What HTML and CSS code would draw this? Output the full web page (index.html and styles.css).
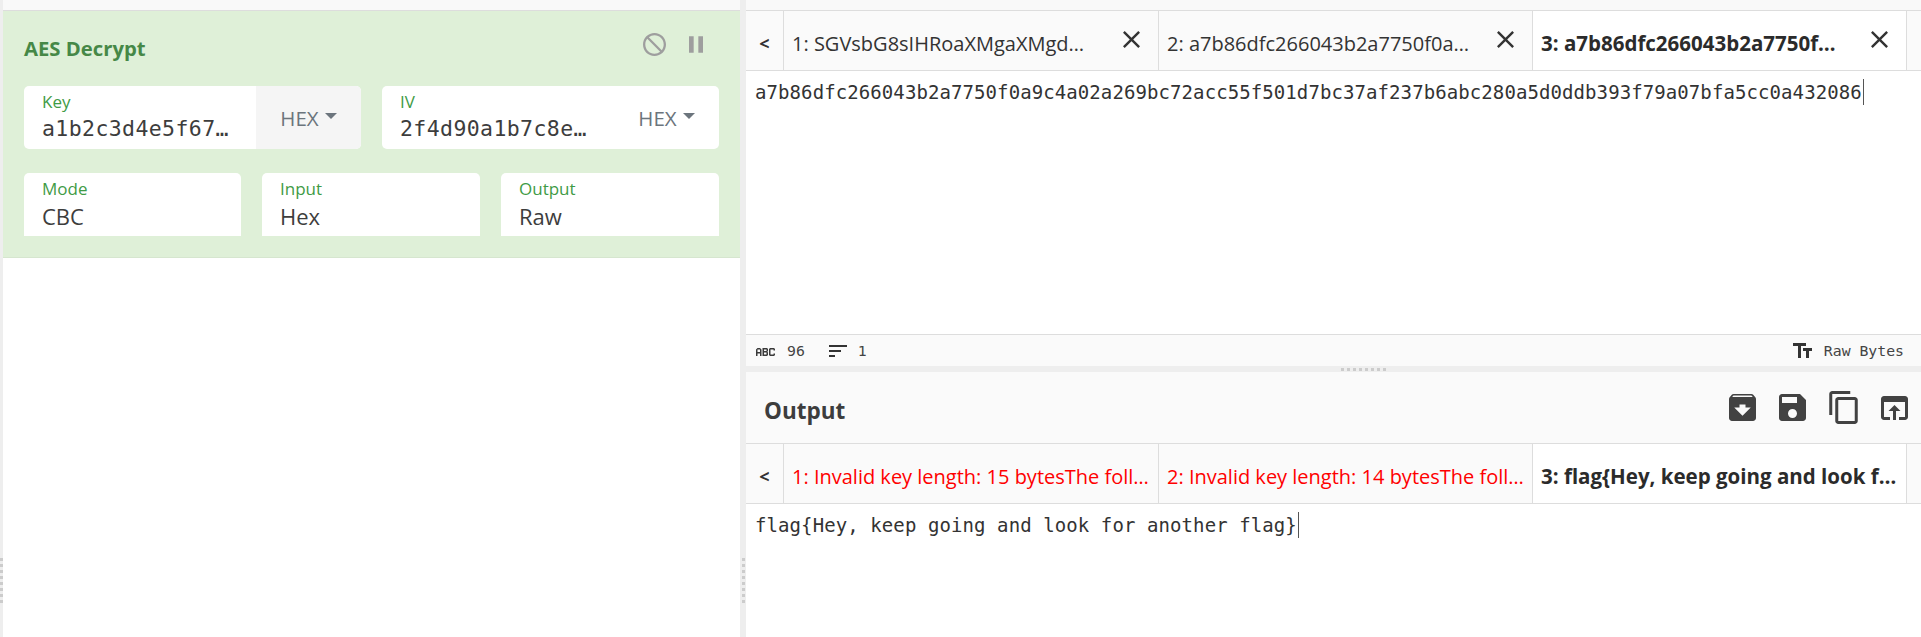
FILE: index.html
```html
<!DOCTYPE html>
<html lang="en">
<head>
<meta charset="utf-8">
<title>CyberChef</title>
<link rel="stylesheet" href="styles.css">
</head>
<body>
<div class="app">
  <section class="recipe">
    <div class="topstrip"></div>
    <div class="op">
      <div class="op-head">
        <div class="op-title">AES Decrypt</div>
        <div class="op-icons">
          <svg class="ic-dis" viewBox="2 2 20 20"><path d="M12 2C6.480 2 2 6.480 2 12s4.480 10 10 10 10-4.480 10-10S17.520 2 12 2zM4 12c0-4.420 3.580-8 8-8 1.850 0 3.550.63 4.900 1.690L5.690 16.900C4.630 15.550 4 13.850 4 12zm8 8c-1.850 0-3.550-.63-4.900-1.690L18.310 7.100C19.370 8.450 20 10.150 20 12c0 4.420-3.580 8-8 8z" fill="#9e9e9e"/></svg>
          <svg class="ic-pause" viewBox="6 5 12 14"><path d="M6 19h4V5H6v14zm8-14v14h4V5h-4z" fill="#9e9e9e"/></svg>
        </div>
      </div>
      <div class="row row-two">
        <div class="field">
          <div class="field-main"><label>Key</label><div class="val mono">a1b2c3d4e5f67…</div></div>
          <div class="drop shaded">HEX<i class="caret"></i></div>
        </div>
        <div class="field">
          <div class="field-main"><label>IV</label><div class="val mono">2f4d90a1b7c8e…</div></div>
          <div class="drop">HEX<i class="caret"></i></div>
        </div>
      </div>
      <div class="row row-three">
        <div class="field"><div class="field-main"><label>Mode</label><div class="val">CBC</div></div></div>
        <div class="field"><div class="field-main"><label>Input</label><div class="val">Hex</div></div></div>
        <div class="field"><div class="field-main"><label>Output</label><div class="val">Raw</div></div></div>
      </div>
    </div>
    <div class="grip-v grip-left"><b></b><b></b><b></b><b></b><b></b><b></b><b></b><b></b></div>
  </section>
  <div class="gutter"><div class="grip-v"><b></b><b></b><b></b><b></b><b></b><b></b><b></b><b></b></div></div>
  <section class="io">
    <div class="input-pane">
      <div class="topstrip"></div>
      <div class="tabs">
        <div class="tab-back">&lt;</div>
        <div class="tab"><span class="tab-text">1: SGVsbG8sIHRoaXMgaXMgd…</span><svg class="x" viewBox="5 5 14 14"><path d="M19 6.410L17.590 5 12 10.590 6.410 5 5 6.410 10.590 12 5 17.590 6.410 19 12 13.410 17.590 19 19 17.590 13.410 12z"/></svg></div>
        <div class="tab"><span class="tab-text">2: a7b86dfc266043b2a7750f0a…</span><svg class="x" viewBox="5 5 14 14"><path d="M19 6.410L17.590 5 12 10.590 6.410 5 5 6.410 10.590 12 5 17.590 6.410 19 12 13.410 17.590 19 19 17.590 13.410 12z"/></svg></div>
        <div class="tab active"><span class="tab-text">3: a7b86dfc266043b2a7750f…</span><svg class="x" viewBox="5 5 14 14"><path d="M19 6.410L17.590 5 12 10.590 6.410 5 5 6.410 10.590 12 5 17.590 6.410 19 12 13.410 17.590 19 19 17.590 13.410 12z"/></svg></div>
        <div class="tab-rest"></div>
      </div>
      <div class="editor mono"><span class="cursor">a7b86dfc266043b2a7750f0a9c4a02a269bc72acc55f501d7bc37af237b6abc280a5d0ddb393f79a07bfa5cc0a432086</span></div>
      <div class="status">
        <div class="stat">
          <svg class="ic-abc" viewBox="0 0 19 8"><path d="M0 8V1.500L1.500 0h2.500L5.500 1.500V8H4V5.500H1.500V8zM1.500 4H4V1.500H1.500zM6.500 0h4.500l1 1v2l-.7.7.7.800v2.500l-1 1H6.500zM8 1.500V3h2.500V1.500zM8 4.500v2h2.500v-2zM13 1l1-1h4l1 1v1.500h-1.500v-1h-3v5h3v-1H19V7l-1 1h-4l-1-1z" fill="#3a3a3a"/></svg>
          <span>96</span>
          <svg class="ic-sort" viewBox="3 6 18 12"><path d="M3 18h6v-2H3v2zM3 6v2h18V6H3zm0 7h12v-2H3v2z" fill="#333"/></svg>
          <span>1</span>
        </div>
        <div class="stat">
          <svg class="ic-tt" viewBox="2.500 4 19 15"><path d="M2.500 4v3h5v12h3V7h5V4h-13zm19 5h-9v3h3v7h3v-7h3V9z" fill="#333"/></svg>
          <span>Raw Bytes</span>
        </div>
      </div>
    </div>
    <div class="hgutter"><div class="grip-h"><b></b><b></b><b></b><b></b><b></b><b></b><b></b><b></b></div></div>
    <div class="output-pane">
      <div class="out-head">
        <div class="out-title">Output</div>
        <div class="out-icons">
          <svg class="ic-archive" viewBox="3 3 18 18"><path d="M20.540 5.230l-1.390-1.680C18.880 3.210 18.470 3 18 3H6c-.47 0-.88.21-1.160.55L3.460 5.230C3.170 5.570 3 6.020 3 6.500V19c0 1.100.9 2 2 2h14c1.100 0 2-.9 2-2V6.500c0-.48-.17-.93-.46-1.270zM12 17.500L6.500 12H10v-2h4v2h3.500L12 17.500zM5.120 5l.81-1h12l.94 1H5.120z" fill="#424242"/></svg>
          <svg class="ic-save" viewBox="3 3 18 18"><path d="M17 3H5c-1.110 0-2 .9-2 2v14c0 1.100.89 2 2 2h14c1.100 0 2-.9 2-2V7l-4-4zm-5 16c-1.660 0-3-1.340-3-3s1.340-3 3-3 3 1.340 3 3-1.340 3-3 3zm3-10H5V5h10v4z" fill="#424242"/></svg>
          <svg class="ic-copy" viewBox="2 1 19 22"><path d="M16 1H4c-1.100 0-2 .9-2 2v14h2V3h12V1zm3 4H8c-1.100 0-2 .9-2 2v14c0 1.100.9 2 2 2h11c1.100 0 2-.9 2-2V7c0-1.100-.9-2-2-2zm0 16H8V7h11v14z" fill="#424242"/></svg>
          <svg class="ic-open" viewBox="3 4 18 16"><path d="M19 4H5c-1.110 0-2 .9-2 2v12c0 1.100.89 2 2 2h4v-2H5V8h14v10h-4v2h4c1.100 0 2-.9 2-2V6c0-1.100-.9-2-2-2zm-7 6l-4 4h3v6h2v-6h3l-4-4z" fill="#424242"/></svg>
        </div>
      </div>
      <div class="tabs tabs-out">
        <div class="tab-back">&lt;</div>
        <div class="tab err"><span class="tab-text">1: Invalid key length: 15 bytesThe foll…</span></div>
        <div class="tab err"><span class="tab-text">2: Invalid key length: 14 bytesThe foll…</span></div>
        <div class="tab active"><span class="tab-text">3: flag{Hey, keep going and look f…</span></div>
        <div class="tab-rest"></div>
      </div>
      <div class="editor mono"><span class="cursor">flag{Hey, keep going and look for another flag}</span></div>
    </div>
  </section>
</div>
</body>
</html>
```

FILE: styles.css
```css
* { box-sizing: border-box; }
html, body { margin: 0; padding: 0; height: 100%; background: #fff; overflow: hidden; }
body { font-family: "Open Sans", "Noto Sans", sans-serif; color: #333; }
.mono { font-family: "DejaVu Sans Mono", "Liberation Mono", monospace; }

.app { display: flex; width: 1921px; height: 637px; background: #eee; padding-left: 3px; }
.recipe { width: 737px; background: #fff; display: flex; flex-direction: column; position: relative; }
.gutter { width: 6px; background: #eee; display: flex; align-items: flex-end; justify-content: center; padding-bottom: 34px; }
.io { flex: 1; display: flex; flex-direction: column; background: #fff; min-width: 0; }

.topstrip { height: 11px; background: #f9f9f9; border-bottom: 1px solid #ddd; flex: none; }

.op { background: #dff0d8; height: 247px; border-bottom: 1px solid #d6e6cf; padding: 0 21px; flex: none; }
.op-head { height: 75px; display: flex; justify-content: space-between; align-items: center; }
.op-title { font-size: 20.300px; font-weight: 700; color: #468847; padding-bottom: 2px; }
.op-icons { display: flex; align-items: center; gap: 23px; padding-right: 16px; margin-top: -9px; }
.ic-dis { width: 23px; height: 23px; display: block; transform: scaleX(-1); }
.ic-pause { width: 14px; height: 17px; display: block; }

.row { display: grid; }
.row-two { grid-template-columns: 337px 337px; column-gap: 21px; margin-bottom: 24px; }
.row-three { grid-template-columns: 217px 218px 218px; column-gap: 21px; }
.field { display: flex; height: 63px; background: #fff; border-radius: 5px 5px 0 0; overflow: hidden; }
.row-two .field { border-radius: 5px; }
.field-main { flex: 1; min-width: 0; padding: 6px 18px 0; }
label { display: block; font-size: 17px; line-height: 19px; color: #3f9b46; }
.val { font-size: 22px; line-height: 32px; color: #3d3d3d; margin-top: 2px; }
.val.mono { font-size: 21.500px; letter-spacing: 0.4px; white-space: nowrap; margin-top: 2px; }
.drop { width: 105px; flex: none; display: flex; align-items: center; justify-content: center; gap: 6px; font-size: 20.500px; color: #6c757d; }
.drop.shaded { background: #f5f5f5; }
.caret { display: block; width: 0; height: 0; border-left: 6px solid transparent; border-right: 6px solid transparent; border-top: 6px solid #6c757d; margin-top: -3px; }

.grip-v { display: flex; flex-direction: column; gap: 3px; }
.grip-v b { display: block; width: 3px; height: 3px; background: #ccc; }
.grip-left { position: absolute; left: -3px; bottom: 34px; }

.tabs { display: flex; height: 60px; background: #fafafa; border-bottom: 1px solid #ddd; flex: none; align-items: stretch; }
.tab-back { width: 38px; flex: none; display: flex; align-items: center; justify-content: center; border-right: 1px solid #ddd; font-weight: 700; font-size: 18px; color: #333; padding-top: 5px; }
.tab { width: 374px; flex: none; display: flex; align-items: center; justify-content: space-between; padding: 0 18px 0 8px; border-right: 1px solid #ddd; font-size: 20px; color: #333; }
.tab-back + .tab { width: 375px; }
.tab-text { white-space: nowrap; overflow: hidden; padding-top: 5px; }
.tab.active { background: #fff; font-weight: 700; font-size: 20.500px; color: #2b2b2b; }
.tab.err { color: #f00; }
.tabs-out .tab { padding-right: 5px; }
.tab-rest { flex: 1; }
.x { width: 17px; height: 17px; flex: none; margin-top: -3px; fill: #333; }

.input-pane { height: 366px; display: flex; flex-direction: column; flex: none; }
.editor { flex: 1; padding: 8px 9px 0; font-size: 19px; line-height: 26px; color: #333; letter-spacing: 0.09px; white-space: nowrap; min-height: 0; }
.cursor { border-right: 1px solid #555; display: inline-block; line-height: 26px; padding-right: 1px; }
.status { height: 32px; flex: none; background: #fafafa; border-top: 1px solid #ddd; display: flex; justify-content: space-between; align-items: center; padding: 0 17px 0 10px; font-family: "DejaVu Sans Mono", monospace; font-size: 14.800px; color: #444; }
.stat { display: flex; align-items: center; }
.ic-abc { width: 19px; height: 8px; margin-right: 12px; margin-top: 2px; }
.ic-sort { width: 18px; height: 12px; margin: 0 11px 0 24px; }
.ic-tt { width: 19px; height: 15px; margin-right: 12px; }

.hgutter { height: 6px; flex: none; background: #eee; display: flex; justify-content: center; align-items: center; padding-left: 60px; }
.grip-h { display: flex; gap: 3px; }
.grip-h b { display: block; width: 3px; height: 3px; background: #ccc; }

.output-pane { flex: 1; display: flex; flex-direction: column; min-height: 0; }
.out-head { height: 72px; flex: none; background: #fafafa; border-bottom: 1px solid #ddd; display: flex; justify-content: space-between; align-items: center; padding: 0 13px 0 18px; }
.out-title { font-size: 22.500px; font-weight: 700; color: #3d3d3d; padding-top: 6px; }
.out-icons { display: flex; align-items: center; gap: 23px; }
.out-icons svg { display: block; }
.ic-archive, .ic-save { width: 27px; height: 27px; }
.ic-copy { width: 29px; height: 33px; }
.ic-open { width: 27px; height: 24px; }
```
